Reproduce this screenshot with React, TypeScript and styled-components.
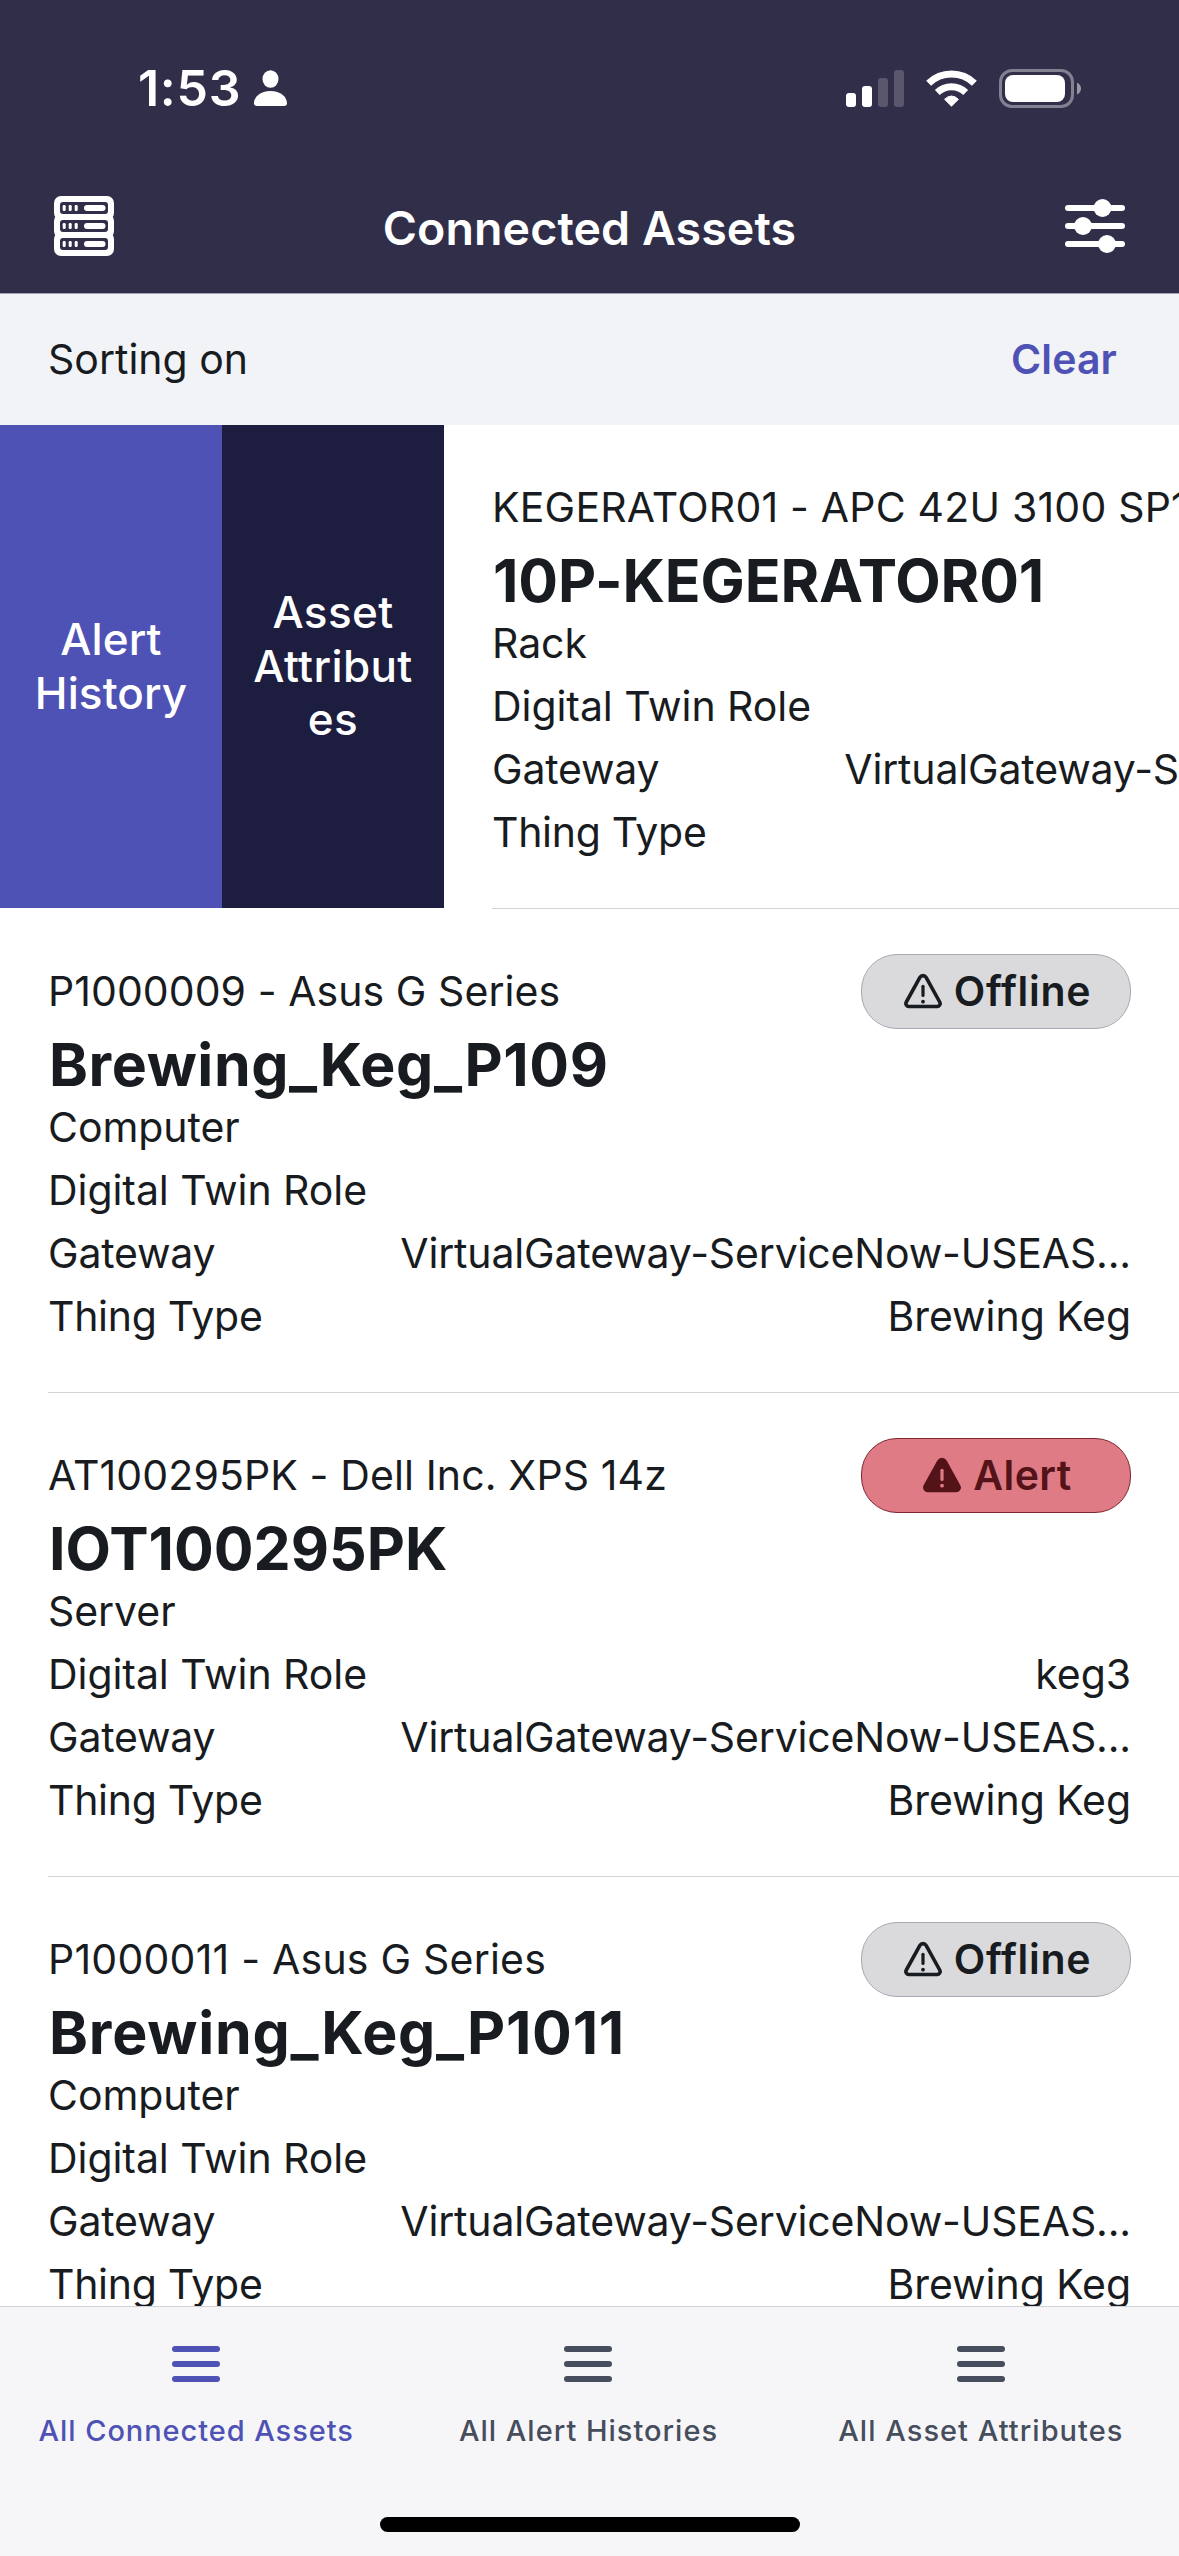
import React from 'react';
import styled, { createGlobalStyle } from 'styled-components';

const ink = '#181b20';
const brand = '#4f52b5';
const slate = '#464d5c';

const GlobalStyle = createGlobalStyle`
  * { box-sizing: border-box; }
  body {
    margin: 0;
    background: #ffffff;
    font-family: Inter, "Liberation Sans", sans-serif;
    color: ${ink};
  }
  svg { display: block; flex: none; }
`;

const Screen = styled.div`
  width: 1179px;
  height: 2556px;
  display: flex;
  flex-direction: column;
  overflow: hidden;
  background: #ffffff;
`;

const Header = styled.header`
  flex: none;
  height: 294px;
  background: #312e49;
  border-bottom: 1px solid #a79fc0;
  color: #ffffff;
`;

const StatusBar = styled.div`
  height: 176px;
  padding: 0 98px 0 138px;
  display: flex;
  align-items: center;
  justify-content: space-between;
`;

const StatusGroup = styled.div<{ $gap: number }>`
  display: flex;
  align-items: center;
  gap: ${(p) => p.$gap}px;
`;

const Clock = styled.span`
  font-size: 50px;
  line-height: 60px;
  font-weight: 600;
  letter-spacing: 0.7px;
`;

const NavBar = styled.div`
  height: 100px;
  padding: 0 54px;
  display: grid;
  grid-template-columns: 60px 1fr 60px;
  align-items: center;
`;

const NavTitle = styled.h1`
  margin: 3px 0 0;
  text-align: center;
  font-size: 46.5px;
  line-height: 56px;
  font-weight: 600;
  letter-spacing: 0.1px;
`;

const SortBar = styled.div`
  flex: none;
  height: 131px;
  padding: 0 62px 2px 48px;
  display: flex;
  align-items: center;
  justify-content: space-between;
  background: #f2f3f7;
  font-size: 41px;
  line-height: 50px;
`;

const ClearButton = styled.button`
  padding: 0;
  border: 0;
  background: none;
  font: inherit;
  font-weight: 600;
  letter-spacing: 0.12px;
  color: ${brand};
`;

const List = styled.main`
  flex: 1;
  min-height: 0;
  overflow: hidden;
`;

const SwipeRow = styled.div`
  display: flex;
  height: 484px;
  overflow: hidden;
`;

const SwipeAction = styled.button<{ $color: string; $tracking: number }>`
  flex: none;
  width: 222px;
  height: 483px;
  padding: 0 24px;
  border: 0;
  display: flex;
  align-items: center;
  justify-content: center;
  background: ${(p) => p.$color};
  color: #ffffff;
  font-family: inherit;
  font-size: 44px;
  line-height: 53.7px;
  font-weight: 500;
  letter-spacing: ${(p) => p.$tracking}px;
  text-align: center;
  overflow-wrap: anywhere;
`;

const Card = styled.article`
  flex: none;
  width: 1179px;
  height: 484px;
  padding-left: 48px;
`;

const CardBody = styled.div`
  height: 484px;
  padding: 45px 48px 0 0;
  border-bottom: 1px solid #d3d3d8;
  font-size: 41px;
  line-height: 63px;
`;

const CardTop = styled.div`
  height: 75px;
  display: flex;
  align-items: center;
  justify-content: space-between;
  white-space: nowrap;
`;

const CardTitle = styled.h2<{ $tracking: number }>`
  margin: 0;
  padding: 5px 0 0 1px;
  font-size: 59px;
  line-height: 62px;
  font-weight: 700;
  letter-spacing: ${(p) => p.$tracking}px;
`;

const Field = styled.div`
  height: 63px;
  display: flex;
  justify-content: space-between;
  white-space: nowrap;
`;

const Text = styled.span<{ $tracking?: number }>`
  letter-spacing: ${(p) => p.$tracking ?? -0.06}px;
`;

type Status = 'Offline' | 'Alert';

const Badge = styled.div<{ $status: Status }>`
  width: 270px;
  height: 75px;
  border-radius: 36px;
  border: 1px solid ${(p) => (p.$status === 'Alert' ? '#7d2632' : '#a9a8b3')};
  background: ${(p) => (p.$status === 'Alert' ? '#df7b84' : '#dadadd')};
  color: ${(p) => (p.$status === 'Alert' ? '#541318' : ink)};
  display: flex;
  align-items: center;
  justify-content: center;
  gap: 12px;
  padding-left: 3px;
  font-weight: 600;
  letter-spacing: ${(p) => (p.$status === 'Alert' ? 0.42 : 0.7)}px;
`;

const Footer = styled.footer`
  flex: none;
  height: 250px;
  border-top: 1px solid #cfd0d8;
  background: #f6f6f9;
  display: flex;
  flex-direction: column;
  align-items: center;
`;

const Tabs = styled.nav`
  width: 100%;
  padding: 39px 2px 0 0;
  display: grid;
  grid-template-columns: repeat(3, 1fr);
`;

const Tab = styled.div<{ $active?: boolean; $tracking: number }>`
  display: flex;
  flex-direction: column;
  align-items: center;
  gap: 29px;
  color: ${(p) => (p.$active ? brand : slate)};
  font-size: 29px;
  line-height: 40px;
  font-weight: 500;
  letter-spacing: ${(p) => p.$tracking}px;
  white-space: nowrap;
`;

const HomeIndicator = styled.div`
  width: 420px;
  height: 15px;
  margin: auto 0 24px;
  border-radius: 8px;
  background: #000000;
`;

const PersonIcon = () => (
  <svg width="33" height="36" viewBox="0 0 33 36" fill="currentColor">
    <ellipse cx="16.5" cy="9" rx="8" ry="8.8" />
    <path d="M3 36C1 36 0 35 0 33.2C0 27 6.500 21 16.500 21S33 27 33 33.200C33 35 32 36 30 36Z" />
  </svg>
);

const SignalIcon = () => (
  <svg width="58" height="37" viewBox="0 0 58 37" fill="currentColor">
    <rect x="0" y="23" width="10" height="14" rx="3" />
    <rect x="16" y="16" width="10" height="21" rx="3" />
    <rect x="32" y="8" width="10" height="29" rx="3" opacity="0.2" />
    <rect x="48" y="0" width="10" height="37" rx="3" opacity="0.2" />
  </svg>
);

const WifiIcon = () => (
  <svg width="51" height="37" viewBox="0 0 51 37" fill="none" stroke="currentColor">
    <path d="M2.600 13.300A33 33 0 0 1 48.400 13.300" strokeWidth="7" />
    <path d="M11.300 22.400A20.500 20.500 0 0 1 39.700 22.400" strokeWidth="7" />
    <path d="M25.500 36.200L18.600 29.300Q25.500 22.700 32.400 29.300Z" fill="currentColor" strokeWidth="1" strokeLinejoin="round" />
  </svg>
);

const BatteryIcon = () => (
  <svg width="82" height="39" viewBox="0 0 82 39" fill="currentColor">
    <rect x="1.500" y="1.500" width="72" height="36" rx="11.500" fill="none" stroke="currentColor" strokeWidth="3" opacity="0.4" />
    <rect x="6" y="6" width="60" height="27" rx="8" />
    <path d="M78 13.500Q82 15.500 82 19.500T78 25.500Z" opacity="0.5" />
  </svg>
);

const ServerIcon = () => (
  <svg width="60" height="60" viewBox="0 0 60 60">
    {[0, 18, 36].map((y) => (
      <rect key={y} x="0" y={y} width="60" height="24" rx="7" fill="#ffffff" />
    ))}
    {[0, 18, 36].map((y) => (
      <g key={y} fill="#ffffff">
        <rect x="6" y={y + 6} width="48" height="12" rx="3" fill="#312e49" />
        <rect x="8.700" y={y + 9} width="3" height="6" rx="1.200" />
        <rect x="14.700" y={y + 9} width="3" height="6" rx="1.200" />
        <rect x="20.700" y={y + 9} width="3" height="6" rx="1.200" />
        <rect x="30" y={y + 9} width="21.500" height="6" rx="3" />
      </g>
    ))}
  </svg>
);

const SlidersIcon = () => (
  <svg width="60" height="60" viewBox="0 0 60 60" fill="currentColor">
    <rect x="0" y="9" width="60" height="6" rx="3" />
    <rect x="0" y="27" width="60" height="6" rx="3" />
    <rect x="0" y="45" width="60" height="6" rx="3" />
    <circle cx="37.500" cy="12" r="9" />
    <circle cx="18" cy="30" r="9" />
    <circle cx="42" cy="48" r="9" />
  </svg>
);

const WarningIcon = ({ filled }: { filled: boolean }) => (
  <svg width="38" height="37" viewBox="0 0 38 37" fill="none" stroke="currentColor">
    <path
      d="M15.900 4.400a3.600 3.600 0 0 1 6.200 0L35.700 29a3 3 0 0 1-2.700 4.500H5a3 3 0 0 1-2.700-4.500Z"
      fill={filled ? 'currentColor' : 'none'}
      strokeWidth="3.600"
      strokeLinejoin="round"
    />
    <path d="M19 13.300v9.200" stroke={filled ? '#df7b84' : 'currentColor'} strokeWidth="3.200" strokeLinecap="round" />
    <circle cx="19" cy="28.700" r="1.900" fill={filled ? '#df7b84' : 'currentColor'} stroke="none" />
  </svg>
);

const MenuIcon = () => (
  <svg width="48" height="36" viewBox="0 0 48 36" fill="currentColor">
    <rect x="0" y="0" width="48" height="6" rx="3" />
    <rect x="0" y="15" width="48" height="6" rx="3" />
    <rect x="0" y="30" width="48" height="6" rx="3" />
  </svg>
);

interface Asset {
  model: string;
  modelTracking: number;
  name: string;
  nameTracking: number;
  kind: string;
  status?: Status;
  role?: string;
  gateway: string;
  thing?: string;
}

const gateway = 'VirtualGateway-ServiceNow-USEAS...';

const swipedAsset: Asset = {
  model: 'KEGERATOR01 - APC 42U 3100 SP1',
  modelTracking: 0.2,
  name: '10P-KEGERATOR01',
  nameTracking: -0.1,
  kind: 'Rack',
  gateway,
};

const assets: Asset[] = [
  { model: 'P1000009 - Asus G Series', modelTracking: 0.06, name: 'Brewing_Keg_P109', nameTracking: 0.56, kind: 'Computer', status: 'Offline', gateway, thing: 'Brewing Keg' },
  { model: 'AT100295PK - Dell Inc. XPS 14z', modelTracking: 0.12, name: 'IOT100295PK', nameTracking: 0, kind: 'Server', status: 'Alert', role: 'keg3', gateway, thing: 'Brewing Keg' },
  { model: 'P1000011 - Asus G Series', modelTracking: 0.22, name: 'Brewing_Keg_P1011', nameTracking: 0.76, kind: 'Computer', status: 'Offline', gateway, thing: 'Brewing Keg' },
];

const AssetCard = ({ asset }: { asset: Asset }) => (
  <Card>
    <CardBody>
      <CardTop>
        <Text $tracking={asset.modelTracking}>{asset.model}</Text>
        {asset.status && (
          <Badge $status={asset.status}>
            <WarningIcon filled={asset.status === 'Alert'} />
            {asset.status}
          </Badge>
        )}
      </CardTop>
      <CardTitle $tracking={asset.nameTracking}>{asset.name}</CardTitle>
      <Field><Text>{asset.kind}</Text></Field>
      <Field>
        <Text>Digital Twin Role</Text>
        {asset.role && <Text>{asset.role}</Text>}
      </Field>
      <Field>
        <Text $tracking={-0.2}>Gateway</Text>
        <Text $tracking={-0.16}>{asset.gateway}</Text>
      </Field>
      <Field>
        <Text $tracking={-0.3}>Thing Type</Text>
        {asset.thing && <Text>{asset.thing}</Text>}
      </Field>
    </CardBody>
  </Card>
);

export default function App() {
  return (
    <>
      <GlobalStyle />
      <Screen>
        <Header>
          <StatusBar>
            <StatusGroup $gap={13}>
              <Clock>1:53</Clock>
              <PersonIcon />
            </StatusGroup>
            <StatusGroup $gap={22}>
              <SignalIcon />
              <WifiIcon />
              <BatteryIcon />
            </StatusGroup>
          </StatusBar>
          <NavBar>
            <ServerIcon />
            <NavTitle>Connected Assets</NavTitle>
            <SlidersIcon />
          </NavBar>
        </Header>
        <SortBar>
          <span>Sorting on</span>
          <ClearButton>Clear</ClearButton>
        </SortBar>
        <List>
          <SwipeRow>
            <SwipeAction $color={brand} $tracking={0.1}>Alert History</SwipeAction>
            <SwipeAction $color="#1d1d3f" $tracking={0.4}>Asset Attributes</SwipeAction>
            <AssetCard asset={swipedAsset} />
          </SwipeRow>
          {assets.map((asset) => (
            <AssetCard key={asset.name} asset={asset} />
          ))}
        </List>
        <Footer>
          <Tabs>
            <Tab $active $tracking={0.93}><MenuIcon />All Connected Assets</Tab>
            <Tab $tracking={0.99}><MenuIcon />All Alert Histories</Tab>
            <Tab $tracking={1.03}><MenuIcon />All Asset Attributes</Tab>
          </Tabs>
          <HomeIndicator />
        </Footer>
      </Screen>
    </>
  );
}
